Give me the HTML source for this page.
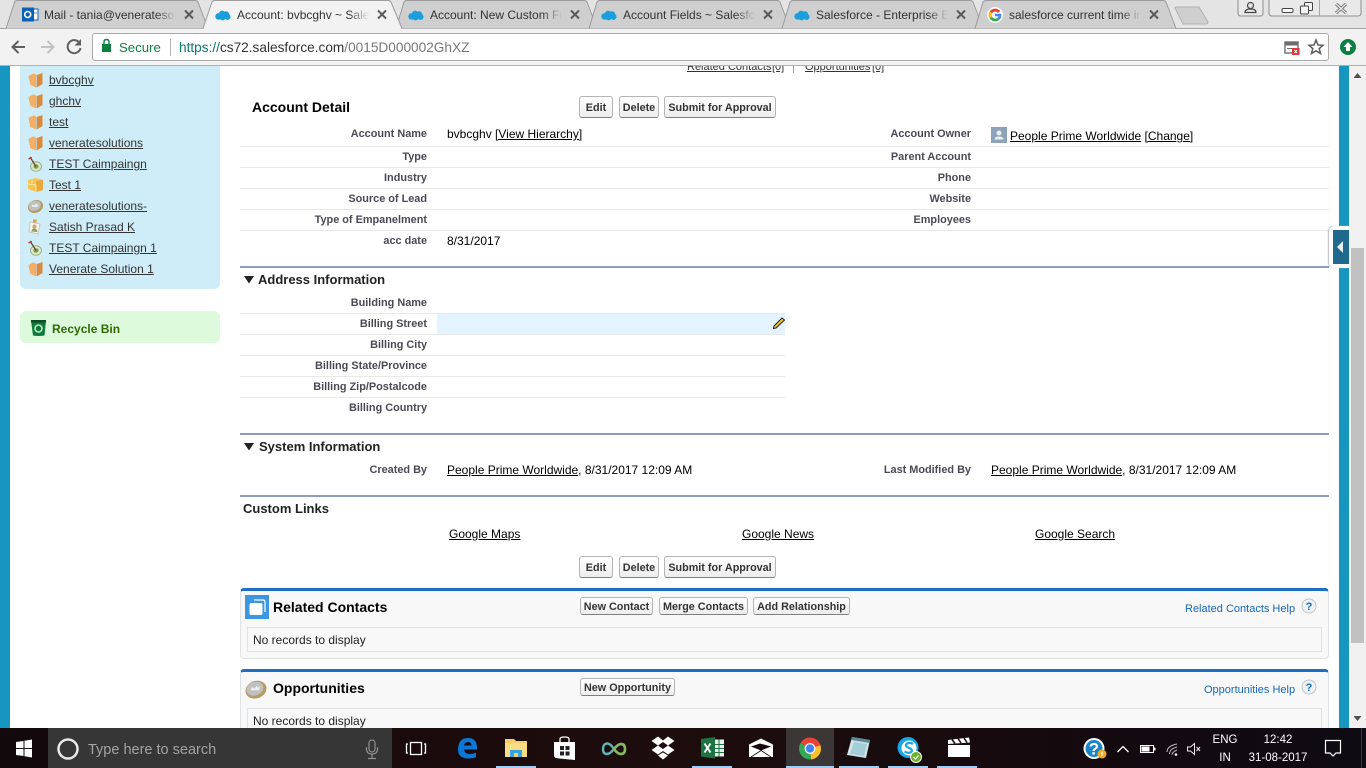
<!DOCTYPE html>
<html><head><meta charset="utf-8"><title>Account: bvbcghv ~ Salesforce</title>
<style>
html,body{margin:0;padding:0}
body{width:1366px;height:768px;overflow:hidden;position:relative;background:#fff;font-family:"Liberation Sans",Arial,sans-serif;font-size:12px;color:#000}
.a{position:absolute}
.t{position:absolute;white-space:nowrap;line-height:14px;height:14px}
.l{position:absolute;left:240px;width:187px;text-align:right;font-weight:bold;font-size:10.9px;color:#4a4a56;line-height:14px;white-space:nowrap}
.r{position:absolute;left:780px;width:191px;text-align:right;font-weight:bold;font-size:10.9px;color:#4a4a56;line-height:14px;white-space:nowrap}
.u{text-decoration:underline}
.hr{position:absolute;height:1px;background:#e6e8ea}
.sec{position:absolute;left:240px;width:1089px;height:2px;background:#8e9dbe}
.h{position:absolute;font-weight:bold;font-size:13px;line-height:16px;color:#222;white-space:nowrap}
.b{position:absolute;box-sizing:border-box;border:1px solid #b5b5b5;border-bottom-color:#7f7f7f;border-radius:3px;background:linear-gradient(#fff,#ededed);font-weight:bold;font-size:10.8px;color:#333;text-align:center;line-height:22px;white-space:nowrap}
.s{position:absolute;left:49px;font-size:12px;line-height:14px;color:#333;text-decoration:underline;white-space:nowrap}
.tt{position:absolute;top:8px;width:132px;overflow:hidden;white-space:nowrap;font-size:12px;line-height:15px;color:#333;-webkit-mask-image:linear-gradient(90deg,#000 85%,transparent);mask-image:linear-gradient(90deg,#000 85%,transparent)}
.box{position:absolute;left:240px;width:1089px;box-sizing:border-box;background:#f8f8f8;border:1px solid #e0e3e5;border-top:3px solid #1f6fc0;border-radius:4px}
.in{position:absolute;left:247px;width:1075px;box-sizing:border-box;border:1px solid #e0e3e5;background:#f8f8f8}
.help{position:absolute;font-size:11px;line-height:14px;color:#1468b8;white-space:nowrap}
.tk{position:absolute;color:#fff;font-size:11.5px;line-height:14px;white-space:nowrap;text-align:center}
</style></head><body>

<svg width="0" height="0" style="position:absolute">
<defs>
<symbol id="folder" viewBox="0 0 16 16"><path d="M1 4 L6 1.500 L9 3 L15 1 L15 12 L9 15.500 L3 13 Z" fill="#f2a552"/><path d="M9 3.500 L15 1 L15 12 L9 15.500 Z" fill="#d98a3c"/><path d="M1 4 L6 1.500 L9 3.500 L9 15.500 L3 13 Z" fill="#f5ae62"/><path d="M9 3.500 V15.500" stroke="#c9c3b3" stroke-width="1"/></symbol>
<symbol id="target" viewBox="0 0 16 16"><ellipse cx="8.500" cy="10.500" rx="5.500" ry="4.800" fill="#dfe8c8" stroke="#9aae8a"/><ellipse cx="8.500" cy="10.500" rx="2.600" ry="2.300" fill="#7da04d"/><path d="M2.500 1 L8.500 10.500" stroke="#6b4a33" stroke-width="1.300"/><path d="M1 3 L4.500 1.500" stroke="#b5442f" stroke-width="1.300"/></symbol>
<symbol id="coin" viewBox="0 0 16 16"><ellipse cx="8" cy="8.500" rx="7.800" ry="6.300" fill="#b89a62" transform="rotate(-20 8 8.500)"/><ellipse cx="7.200" cy="7.800" rx="6.300" ry="4.900" fill="#bfc1c1" transform="rotate(-20 7.200 7.800)"/><path d="M4 9 L5 6.500 L7 7.500 L8.500 5.500 L9.500 7 L11 6 L10 9 Z" fill="#ececec"/></symbol>
<symbol id="cloud" viewBox="0 0 18 12"><g fill="#1b9fdc"><circle cx="4" cy="7" r="3.700"/><circle cx="8" cy="4" r="3.500"/><circle cx="12.500" cy="4.500" r="3.300"/><circle cx="14" cy="7.500" r="3.500"/><circle cx="8.500" cy="8" r="3.500"/></g></symbol>
</defs>
</svg>

<!-- chrome top -->
<div class="a" style="left:0;top:0;width:1366px;height:28px;background:#e4e4e4"></div>
<svg class="a" style="left:0;top:0" width="1366" height="30">
<path d="M0 28.500 H1366" stroke="#a6a6a6"/>
<g fill="#cfcfcf" stroke="#9c9c9c">
<path d="M6 28.500 L15 1 Q16 .5 18 .5 H195 Q197 .5 198 2 L208 28.500"/>
<path d="M396 28.500 L404 2 Q405 .5 407 .5 H584 Q586 .5 587 2 L597 28.500"/>
<path d="M589 28.500 L597 2 Q598 .5 600 .5 H777 Q779 .5 780 2 L790 28.500"/>
<path d="M782 28.500 L790 2 Q791 .5 793 .5 H970 Q972 .5 973 2 L983 28.500"/>
<path d="M975 28.500 L983 2 Q984 .5 986 .5 H1163 Q1165 .5 1166 2 L1176 28.500"/>
</g>
<path d="M203 28.500 L212 2 Q213 .5 215 .5 H388 Q390 .5 391 2 L402 28.500" fill="#f2f2f2" stroke="#9c9c9c"/>
<path d="M204 29 H401" stroke="#f2f2f2" stroke-width="2"/>
<path d="M1175 8 Q1175 7 1177 7 H1199 L1208 22 Q1208 24 1206 24 H1183 Z" fill="#cfcfcf" stroke="#b3b3b3"/>
<g fill="none" stroke="#5a5a5a" stroke-width="2">
<path d="M185 10.500 L193 18.500 M193 10.500 L185 18.500"/>
<path d="M378 10.500 L386 18.500 M386 10.500 L378 18.500"/>
<path d="M571 10.500 L579 18.500 M579 10.500 L571 18.500"/>
<path d="M764 10.500 L772 18.500 M772 10.500 L764 18.500"/>
<path d="M957 10.500 L965 18.500 M965 10.500 L957 18.500"/>
<path d="M1150 10.500 L1158 18.500 M1158 10.500 L1150 18.500"/>
</g>
<!-- outlook -->
<rect x="29" y="9" width="9" height="11" fill="#fff" stroke="#0a62b8"/><path d="M30 13 H37 M33.500 10 V20" stroke="#0a62b8" stroke-width=".8"/>
<rect x="22" y="7.500" width="12" height="14" fill="#0a62b8"/><circle cx="27.700" cy="14.500" r="3" fill="none" stroke="#fff" stroke-width="1.600"/>
<!-- clouds -->
<use href="#cloud" x="215" y="10" width="16" height="11"/>
<use href="#cloud" x="408" y="10" width="16" height="11"/>
<use href="#cloud" x="601" y="10" width="16" height="11"/>
<use href="#cloud" x="794" y="10" width="16" height="11"/>
<!-- G -->
<circle cx="995" cy="15" r="8" fill="#fff"/>
<path d="M1000.300 11.200 A6.500 6.500 0 0 0 989.700 11.500 L992 13.300 A3.700 3.700 0 0 1 997.800 12.800 Z" fill="#ea4335"/>
<path d="M989.700 11.500 A6.500 6.500 0 0 0 989.700 18.500 L992 16.700 A3.700 3.700 0 0 1 992 13.300 Z" fill="#fbbc05"/>
<path d="M989.700 18.500 A6.500 6.500 0 0 0 999.500 19.700 L997.300 18 A3.700 3.700 0 0 1 992 16.700 Z" fill="#34a853"/>
<path d="M995 13.800 H1001.300 Q1001.800 17.500 999.500 19.700 L997.300 18 Q998.300 17.200 998.600 16.300 H995 Z" fill="#4285f4"/>
<!-- window controls -->
<path d="M1238 0 V13 Q1238 16 1241 16 H1260 Q1263 16 1263 13 V0" fill="#e9e9e9" stroke="#8f8f8f"/>
<path d="M1269 0 V13 Q1269 16 1272 16 H1358 Q1361 16 1361 13 V0" fill="#e9e9e9" stroke="#8f8f8f"/>
<path d="M1319.500 0 V16" stroke="#a8a8a8"/>
<circle cx="1250.500" cy="5.500" r="3" fill="none" stroke="#444" stroke-width="1.200"/><path d="M1245 12.500 Q1245 9 1250.500 9 Q1256 9 1256 12.500 Z" fill="none" stroke="#444" stroke-width="1.200"/>
<rect x="1282" y="8.500" width="11" height="4" rx="1.500" fill="#fff" stroke="#444"/>
<rect x="1304.500" y="2.500" width="8" height="8" rx="1" fill="#f3f3f3" stroke="#444"/><rect x="1300.500" y="6" width="8" height="8" rx="1" fill="#f3f3f3" stroke="#444"/>
<path d="M1336 4 L1346 13 M1346 4 L1336 13" stroke="#666" stroke-width="3"/><path d="M1336 4 L1346 13 M1346 4 L1336 13" stroke="#eee" stroke-width="1.300"/>
</svg>
<div class="tt" style="left:44px">Mail - tania@veneratesolutions</div>
<div class="tt" style="left:237px">Account: bvbcghv ~ Salesforce</div>
<div class="tt" style="left:430px">Account: New Custom Field</div>
<div class="tt" style="left:623px">Account Fields ~ Salesforce</div>
<div class="tt" style="left:816px">Salesforce - Enterprise Edition</div>
<div class="tt" style="left:1009px">salesforce current time in formula</div>

<!-- toolbar -->
<div class="a" style="left:0;top:29px;width:1366px;height:36px;background:#f2f2f2"></div>
<div class="a" style="left:0;top:65px;width:1366px;height:1px;background:#b0b0b0"></div>
<div class="a" style="left:92px;top:33px;width:1237px;height:28px;box-sizing:border-box;background:#fff;border:1px solid #ababab;border-radius:3px"></div>
<svg class="a" style="left:0;top:29px" width="1366" height="36">
<g fill="none" stroke-width="2">
<path d="M25 18 H13 M18.500 12 L12.500 18 L18.500 24" stroke="#5f5f5f"/>
<path d="M53 18 H41 M47.500 12 L53.500 18 L47.500 24" stroke="#c2c2c2"/>
<path d="M79.500 14 A6.500 6.500 0 1 0 80.500 19" stroke="#5f5f5f"/>
</g>
<path d="M81 10 V16.500 H74.500 Z" fill="#5f5f5f"/>
<rect x="102" y="15" width="9" height="8" fill="#0b8043"/><path d="M104 15 V13 Q104 10.500 106.500 10.500 Q109 10.500 109 13 V15" fill="none" stroke="#0b8043" stroke-width="1.400"/>
<path d="M170.500 10 V27" stroke="#b5b5b5"/>
<rect x="1285" y="13" width="13" height="11" fill="#fff" stroke="#6e6e6e" stroke-width="1.400"/><rect x="1285" y="13" width="13" height="3.500" fill="#6e6e6e"/><path d="M1287 19.500 H1292" stroke="#6e6e6e"/>
<rect x="1292" y="19" width="7.500" height="7" fill="#d93a3a"/><path d="M1294.500 21 L1297 24 M1297 21 L1294.500 24" stroke="#fff"/>
<path d="M1316 11 L1318 16 L1323 16.300 L1319.200 19.500 L1320.500 24.500 L1316 21.800 L1311.500 24.500 L1312.800 19.500 L1309 16.300 L1314 16 Z" fill="none" stroke="#5f5f5f" stroke-width="1.500"/>
<circle cx="1348" cy="18" r="8" fill="#0b8043"/><path d="M1348 13 L1352.500 18 H1350 V22 H1346 V18 H1343.500 Z" fill="#fff"/>
</svg>
<div class="t" style="left:119px;top:40px;font-size:13.200px;line-height:15px;color:#0b8043">Secure</div>
<div class="t" style="left:179px;top:40px;font-size:13.650px;line-height:15px;color:#777"><span style="color:#0b7a70">https://</span><span style="color:#333">cs72.salesforce.com</span>/0015D000002GhXZ</div>

<!-- page side stripes -->
<div class="a" style="left:0;top:66px;width:10px;height:662px;background:#1797c0"></div>
<div class="a" style="left:1339px;top:66px;width:10px;height:662px;background:#1797c0"></div>
<div class="a" style="left:1349px;top:66px;width:17px;height:662px;background:#f1f1f1"></div>
<div class="a" style="left:1351px;top:248px;width:13px;height:395px;background:#c1c1c1"></div>
<svg class="a" style="left:1349px;top:66px" width="17" height="662"><path d="M4.500 12 L8.500 7 L12.500 12 Z" fill="#505050"/><path d="M4.500 650 L8.500 655 L12.500 650 Z" fill="#505050"/></svg>

<!-- top clipped links -->
<div class="a" style="left:600px;top:66px;width:400px;height:8px;overflow:hidden">
<div class="t u" style="left:87px;top:-6px;font-size:11px;color:#333">Related Contacts</div>
<div class="t u" style="left:172px;top:-6px;font-size:11px;color:#333">[0]</div>
<div class="a" style="left:193px;top:0;width:1px;height:7px;background:#7fa3c7"></div>
<div class="t u" style="left:205px;top:-6px;font-size:11px;color:#333">Opportunities</div>
<div class="t u" style="left:272px;top:-6px;font-size:11px;color:#333">[0]</div>
</div>

<!-- sidebar -->
<div class="a" style="left:20px;top:66px;width:200px;height:223px;background:#cfedf8;border-radius:0 0 6px 6px"></div>
<svg class="a" style="left:27px;top:72px" width="17" height="16"><use href="#folder"/></svg>
<svg class="a" style="left:27px;top:93px" width="17" height="16"><use href="#folder"/></svg>
<svg class="a" style="left:27px;top:114px" width="17" height="16"><use href="#folder"/></svg>
<svg class="a" style="left:27px;top:135px" width="17" height="16"><use href="#folder"/></svg>
<svg class="a" style="left:27px;top:156px" width="17" height="16"><use href="#target"/></svg>
<svg class="a" style="left:27px;top:177px" width="17" height="16"><path d="M1 3 L9 1 L16 3 L16 13 L9 15 L1 12 Z" fill="#f7c450"/><path d="M9 4 L16 3 L16 13 L9 15 Z" fill="#e8a93c"/><path d="M1 7 L9 8 M5 3 V7 M9 8 V15" stroke="#fbe8a8"/></svg>
<svg class="a" style="left:27px;top:198px" width="17" height="16"><use href="#coin"/></svg>
<svg class="a" style="left:27px;top:219px" width="17" height="16"><path d="M3 3 L13 5 L11 15 L2 13 Z" fill="#f4f4ee" stroke="#c8c8c0"/><rect x="6" y="0.500" width="3.500" height="3" fill="#e89a3c"/><circle cx="7.500" cy="7.500" r="2" fill="#d9a577"/><path d="M4 12.500 Q5 9.500 7.500 9.500 Q10 9.500 10.500 13 Z" fill="#8aa05a"/></svg>
<svg class="a" style="left:27px;top:240px" width="17" height="16"><use href="#target"/></svg>
<svg class="a" style="left:27px;top:261px" width="17" height="16"><use href="#folder"/></svg>
<div class="s" style="top:73px">bvbcghv</div>
<div class="s" style="top:94px">ghchv</div>
<div class="s" style="top:115px">test</div>
<div class="s" style="top:136px">veneratesolutions</div>
<div class="s" style="top:157px">TEST Caimpaingn</div>
<div class="s" style="top:178px">Test 1</div>
<div class="s" style="top:199px">veneratesolutions-</div>
<div class="s" style="top:220px">Satish Prasad K</div>
<div class="s" style="top:241px">TEST Caimpaingn 1</div>
<div class="s" style="top:262px">Venerate Solution 1</div>

<div class="a" style="left:20px;top:311px;width:200px;height:32px;background:#ddfadd;border-radius:6px"></div>
<svg class="a" style="left:30px;top:319px" width="18" height="18"><path d="M1 1.500 H16 L14.500 16.500 Q8.500 17.500 3 16.500 Z" fill="#0e7a3a"/><path d="M1 1 H16 V3.500 H1 Z" fill="#0a4d26"/><circle cx="8.500" cy="9.500" r="3.500" fill="none" stroke="#bfe8c8" stroke-width="1.600"/></svg>
<div class="t" style="left:52px;top:322px;font-weight:bold;color:#2f6a00">Recycle Bin</div>

<!-- account detail -->
<div class="t" style="left:252px;top:100px;font-weight:bold;font-size:14px;color:#000">Account Detail</div>
<div class="b" style="left:579px;top:96px;width:34px;height:22px">Edit</div>
<div class="b" style="left:619px;top:96px;width:40px;height:22px">Delete</div>
<div class="b" style="left:664px;top:96px;width:112px;height:22px">Submit for Approval</div>

<div class="l" style="top:127px">Account Name</div>
<div class="l" style="top:150px">Type</div>
<div class="l" style="top:171px">Industry</div>
<div class="l" style="top:192px">Source of Lead</div>
<div class="l" style="top:213px">Type of Empanelment</div>
<div class="l" style="top:234px">acc date</div>
<div class="r" style="top:127px">Account Owner</div>
<div class="r" style="top:150px">Parent Account</div>
<div class="r" style="top:171px">Phone</div>
<div class="r" style="top:192px">Website</div>
<div class="r" style="top:213px">Employees</div>
<div class="t" style="left:447px;top:127px">bvbcghv <span class="u">[View Hierarchy]</span></div>
<svg class="a" style="left:991px;top:127px" width="16" height="16"><rect width="16" height="16" fill="#8da4b8"/><circle cx="8" cy="6" r="2.500" fill="#e8eef3"/><path d="M3.500 12.500 Q3.500 9.500 8 9.500 Q12.500 9.500 12.500 12.500 Z" fill="#e8eef3"/></svg>
<div class="t" style="left:1010px;top:129px"><span class="u">People Prime Worldwide</span> <span class="u">[Change]</span></div>
<div class="t" style="left:447px;top:234px">8/31/2017</div>

<div class="hr" style="left:240px;top:146px;width:1089px"></div>
<div class="hr" style="left:240px;top:167px;width:1089px"></div>
<div class="hr" style="left:240px;top:188px;width:1089px"></div>
<div class="hr" style="left:240px;top:209px;width:1089px"></div>
<div class="hr" style="left:240px;top:230px;width:1089px"></div>

<!-- collapse handle -->
<div class="a" style="left:1329px;top:226px;width:20px;height:42px;background:#fff;border-radius:5px 0 0 5px;box-shadow:-1px 0 1px #b8bcc4"></div>
<div class="a" style="left:1333px;top:230px;width:16px;height:34px;background:#1f6a8c"></div>
<svg class="a" style="left:1333px;top:230px" width="16" height="34"><path d="M4 17 L10 11 V23 Z" fill="#e8eef2"/></svg>

<div class="sec" style="top:266px"></div>
<svg class="a" style="left:243px;top:275px" width="12" height="10"><path d="M1 1 H11 L6 8.500 Z" fill="#222"/></svg>
<div class="h" style="left:258px;top:272px">Address Information</div>

<div class="a" style="left:437px;top:314px;width:348px;height:20px;background:#e3f3ff"></div>
<svg class="a" style="left:772px;top:316px" width="14" height="14"><path d="M2 10 L10 2 L12.500 4 L4 12 L1.500 12.500 Z" fill="#f2c230" stroke="#222" stroke-width="1"/></svg>
<div class="l" style="top:296px">Building Name</div>
<div class="l" style="top:317px">Billing Street</div>
<div class="l" style="top:338px">Billing City</div>
<div class="l" style="top:359px">Billing State/Province</div>
<div class="l" style="top:380px">Billing Zip/Postalcode</div>
<div class="l" style="top:401px">Billing Country</div>
<div class="hr" style="left:240px;top:313px;width:545px"></div>
<div class="hr" style="left:240px;top:334px;width:545px"></div>
<div class="hr" style="left:240px;top:355px;width:545px"></div>
<div class="hr" style="left:240px;top:376px;width:545px"></div>
<div class="hr" style="left:240px;top:397px;width:545px"></div>

<div class="sec" style="top:433px"></div>
<svg class="a" style="left:243px;top:442px" width="12" height="10"><path d="M1 1 H11 L6 8.500 Z" fill="#222"/></svg>
<div class="h" style="left:259px;top:439px">System Information</div>
<div class="l" style="top:463px">Created By</div>
<div class="r" style="top:463px">Last Modified By</div>
<div class="t" style="left:447px;top:463px"><span class="u">People Prime Worldwide</span>, 8/31/2017 12:09 AM</div>
<div class="t" style="left:991px;top:463px"><span class="u">People Prime Worldwide</span>, 8/31/2017 12:09 AM</div>

<div class="sec" style="top:495px"></div>
<div class="h" style="left:243px;top:501px">Custom Links</div>
<div class="t u" style="left:449px;top:527px">Google Maps</div>
<div class="t u" style="left:742px;top:527px">Google News</div>
<div class="t u" style="left:1035px;top:527px">Google Search</div>

<div class="b" style="left:579px;top:556px;width:34px;height:22px">Edit</div>
<div class="b" style="left:619px;top:556px;width:40px;height:22px">Delete</div>
<div class="b" style="left:664px;top:556px;width:112px;height:22px">Submit for Approval</div>

<!-- related contacts -->
<div class="box" style="top:588px;height:71px"></div>
<div class="a" style="left:245px;top:595px;width:24px;height:24px;background:#3d97e0"></div>
<svg class="a" style="left:245px;top:595px" width="24" height="24"><path d="M9 5 H18 Q20 5 20 7 V17" fill="none" stroke="#fff" stroke-width="1.200"/><rect x="4.500" y="8" width="13" height="12" rx="2" fill="#fff"/></svg>
<div class="t" style="left:273px;top:600px;font-weight:bold;font-size:14px;color:#000">Related Contacts</div>
<div class="b" style="left:580px;top:597px;width:73px;height:18px;line-height:18px">New Contact</div>
<div class="b" style="left:659px;top:597px;width:89px;height:18px;line-height:18px">Merge Contacts</div>
<div class="b" style="left:753px;top:597px;width:97px;height:18px;line-height:18px">Add Relationship</div>
<div class="help" style="left:1185px;top:602px">Related Contacts Help</div>
<svg class="a" style="left:1301px;top:598px" width="16" height="16"><circle cx="8" cy="8" r="7" fill="#eef2f5" stroke="#bfc5ca"/><text x="8" y="12" font-family="Liberation Sans" font-size="11" font-weight="bold" text-anchor="middle" fill="#1468b8">?</text></svg>
<div class="in" style="top:627px;height:25px"></div>
<div class="t" style="left:253px;top:633px;color:#222">No records to display</div>

<!-- opportunities -->
<div class="box" style="top:669px;height:80px"></div>
<svg class="a" style="left:244px;top:678px" width="24" height="22"><use href="#coin" width="24" height="22"/></svg>
<div class="t" style="left:273px;top:681px;font-weight:bold;font-size:14px;color:#000">Opportunities</div>
<div class="b" style="left:580px;top:678px;width:95px;height:18px;line-height:18px">New Opportunity</div>
<div class="help" style="left:1204px;top:683px">Opportunities Help</div>
<svg class="a" style="left:1301px;top:679px" width="16" height="16"><circle cx="8" cy="8" r="7" fill="#eef2f5" stroke="#bfc5ca"/><text x="8" y="12" font-family="Liberation Sans" font-size="11" font-weight="bold" text-anchor="middle" fill="#1468b8">?</text></svg>
<div class="in" style="top:708px;height:30px"></div>
<div class="t" style="left:253px;top:714px;color:#222">No records to display</div>

<!-- taskbar -->
<div class="a" style="left:0;top:728px;width:1366px;height:40px;background:linear-gradient(90deg,#12090c,#1a0a0c 30%,#1d0d0d 50%,#150a0e 75%,#0e0b12)"></div>
<div class="a" style="left:48px;top:728px;width:344px;height:40px;background:#363636"></div>
<div class="a" style="left:786px;top:728px;width:48px;height:40px;background:#3b3737"></div>
<div class="a" style="left:496px;top:766px;width:40px;height:2px;background:#9fcdf5"></div>
<div class="a" style="left:692px;top:766px;width:40px;height:2px;background:#9fcdf5"></div>
<div class="a" style="left:786px;top:766px;width:48px;height:2px;background:#9fcdf5"></div>
<div class="a" style="left:839px;top:766px;width:40px;height:2px;background:#9fcdf5"></div>
<div class="a" style="left:888px;top:766px;width:40px;height:2px;background:#9fcdf5"></div>
<div class="a" style="left:937px;top:766px;width:40px;height:2px;background:#9fcdf5"></div>
<svg class="a" style="left:0;top:728px" width="1366" height="40">
<path d="M16 14 L23.500 13 V20 H16 Z M24.500 12.800 L32 11.500 V20 H24.500 Z M16 21 H23.500 V28 L16 27 Z M24.500 21 H32 V29.500 L24.500 28.200 Z" fill="#fff"/>
<circle cx="68" cy="21" r="9.500" fill="none" stroke="#e8e8e8" stroke-width="2.500"/>
<rect x="369" y="12" width="6" height="12" rx="3" fill="none" stroke="#8f8f8f" stroke-width="1.200"/><path d="M366.500 19 V21 Q366.500 26 372 26 Q377.500 26 377.500 21 V19 M372 26 V30 M368 30.500 H376" fill="none" stroke="#8f8f8f" stroke-width="1.200"/>
<rect x="410.500" y="14.500" width="11" height="12" fill="none" stroke="#fff" stroke-width="1.300"/><path d="M408 16 H406.500 V25 H408 M424 16 H425.500 V25 H424" fill="none" stroke="#fff" stroke-width="1.300"/>
<!-- edge -->
<g transform="translate(0,-2)"><path d="M458 24 Q458 12 468 12 Q477 12 477 22 V23.500 H464 Q464.500 28 470 28 Q473.500 28 476 26.500 V31 Q473 32.500 469 32.500 Q458 32.500 458 24 Z M464 19.500 H471.500 Q471.500 16 468 16 Q464.500 16 464 19.500 Z" fill="#0a78d7"/></g>
<!-- explorer -->
<g transform="translate(0,-2)"><path d="M505 13 H514 L516 15 H527 V31 H505 Z" fill="#f5cd6a"/><rect x="505" y="17" width="22" height="14" fill="#fbdd86"/><rect x="510" y="24" width="12" height="7" fill="#35a5e0"/><rect x="514" y="27" width="4" height="4" fill="#f5cd6a"/></g>
<!-- store -->
<g transform="translate(0,-1)"><path d="M554 15 H575 V33 L559 31.500 Q554 31 554 29 Z" fill="#fff"/><path d="M560 15 V12 Q560 10 564.500 10 Q569 10 569 12 V15" fill="none" stroke="#fff" stroke-width="1.300"/><path d="M560 19 H564 V23 H560 Z M565.500 19 H569.500 V23 H565.500 Z M560 24.500 H564 V28.500 H560 Z M565.500 24.500 H569.500 V28.500 H565.500 Z" fill="#222"/></g>
<!-- infinity -->
<path d="M614 21 Q610 15 606.500 15.500 Q603 16.500 603 21 Q603 26 607 26 Q610 26 614 21 Q618 16 621 16 Q625 16 625 21 Q625 26 621 26 Q617.500 26 614 21" fill="none" stroke="#5fb5b5" stroke-width="2.400"/><path d="M614 21 Q618 16 621 16 Q625 16 625 21 Q625 26 621 26 Q617.500 26 614 21" fill="none" stroke="#8ab85a" stroke-width="2.400"/>
<!-- dropbox -->
<g transform="translate(0,-3.500)"><path d="M658 12 L651.500 16.500 L658 21 L651.500 25.500 L658 30 L663 26.500 L668 30 L674.500 25.500 L668 21 L674.500 16.500 L668 12 L663 16 Z M663 17.500 L668 21 L663 24.500 L658 21 Z" fill="#fff" fill-rule="evenodd"/><path d="M658 31 L663 28 L668 31 L663 35 Z" fill="#fff"/></g>
<!-- excel -->
<g transform="translate(0,-2.500)"><rect x="706" y="14" width="18" height="17" fill="#e8f0ea"/><path d="M714 14 V31 M719 14 V31 M708 19 H724 M708 23 H724 M708 27 H724" stroke="#1f7244"/><path d="M701 13.500 L715 11.500 V33 L701 31 Z" fill="#1f7244"/><path d="M704.500 18 L710.500 27 M710.500 18 L704.500 27" stroke="#fff" stroke-width="1.800"/></g>
<!-- mail -->
<path d="M749 16.500 L761 10.500 L773 16.500 V29 H749 Z" fill="#fff"/><path d="M751 18.500 L761 22.500 L771 18.500 L760 15.500 Z" fill="#16090c"/><path d="M751 29 L761 22.500 L771 29" fill="none" stroke="#16090c" stroke-width=".8"/>
<!-- chrome -->
<path d="M810 20.500 L800.500 15 A11 11 0 0 1 820.500 17.200 Z" fill="#ea4335"/>
<path d="M810 20.500 L820.500 17.200 A11 11 0 0 1 811 31.500 Z" fill="#fbc02d"/>
<path d="M810 20.500 L811 31.500 A11 11 0 0 1 800.500 15 Z" fill="#34a853"/>
<circle cx="810" cy="20.500" r="5.400" fill="#fff"/><circle cx="810" cy="20.500" r="4.200" fill="#4285f4"/>
<!-- notepad -->
<g transform="translate(0,-3)"><path d="M852 12 L870 15 L866 33 L847 30 Z" fill="#cfe4ea"/><path d="M852 12 L870 15 L869.500 18 L851.500 15 Z" fill="#5c8a96"/><path d="M854 17 L850 29 L864 31 L867 19 Z" fill="#a5cdd8"/></g>
<!-- skype -->
<circle cx="908" cy="19.500" r="10.500" fill="#1aa6e4"/><circle cx="909" cy="20" r="7.500" fill="#fff"/><path d="M913 16 Q910 14 907 15.500 Q904.500 17.500 908 19.500 Q913 21 911.500 24 Q908 26 904.500 23.500" fill="none" stroke="#1aa6e4" stroke-width="2.200"/>
<circle cx="916" cy="29" r="5.500" fill="#6fb02c" stroke="#fff" stroke-width="1"/><path d="M913.500 29 L915.500 31 L918.500 27.500" fill="none" stroke="#fff" stroke-width="1.200"/>
<!-- clapper -->
<rect x="948" y="17" width="22" height="12" fill="#fff"/><path d="M948 12 L969 9.500 L970 14.500 L948 16 Z" fill="#fff"/><path d="M952 11.500 L955 15.500 M958 10.500 L961 15 M964 10 L967 14.500" stroke="#16090c" stroke-width="1.500"/>
<!-- help tray -->
<circle cx="1094" cy="20.500" r="10.500" fill="#fff"/><circle cx="1094" cy="20.500" r="8.500" fill="#1b85c9"/><text x="1094" y="26.500" font-family="Liberation Sans" font-size="17" font-weight="bold" text-anchor="middle" fill="#fff">?</text>
<circle cx="1102" cy="26" r="4.500" fill="#f5a623"/><path d="M1102 23.500 V28" stroke="#fff" stroke-width="1.300"/>
<!-- tray -->
<path d="M1117.500 24 L1123 18.500 L1128.500 24" fill="none" stroke="#fff" stroke-width="1.300"/>
<rect x="1140.500" y="17.500" width="13" height="7" fill="none" stroke="#fff"/><rect x="1141.500" y="18.500" width="8" height="5" fill="#fff"/><rect x="1154" y="19.500" width="1.500" height="3" fill="#fff"/>
<g fill="none" stroke="#bbb"><path d="M1167 24 Q1167 18 1177 16"/><path d="M1169.500 26 Q1169.500 21 1177 19"/><path d="M1172 27 Q1172 24 1177 22"/></g><circle cx="1176" cy="26.500" r="1.300" fill="#fff"/>
<path d="M1187.500 19 H1190.500 L1194.500 15.500 V26.500 L1190.500 23 H1187.500 Z" fill="none" stroke="#e8e8e8"/><path d="M1196.500 19 L1200 23 M1200 19 L1196.500 23" stroke="#e8e8e8"/>
<!-- notification -->
<path d="M1325.500 12.500 H1340.500 V25 H1336 L1333 28 L1330 25 H1325.500 Z" fill="none" stroke="#fff" stroke-width="1.200"/>
<path d="M1361.500 0 V40" stroke="#3b3b3b"/>
</svg>
<div class="t" style="left:88px;top:741px;font-size:14.500px;line-height:18px;height:18px;color:#a3a3a3">Type here to search</div>
<div class="tk" style="left:1205px;top:733px;width:40px">ENG</div>
<div class="tk" style="left:1205px;top:751px;width:40px">IN</div>
<div class="tk" style="left:1248px;top:733px;width:60px">12:42</div>
<div class="tk" style="left:1243px;top:751px;width:70px">31-08-2017</div>

</body></html>
